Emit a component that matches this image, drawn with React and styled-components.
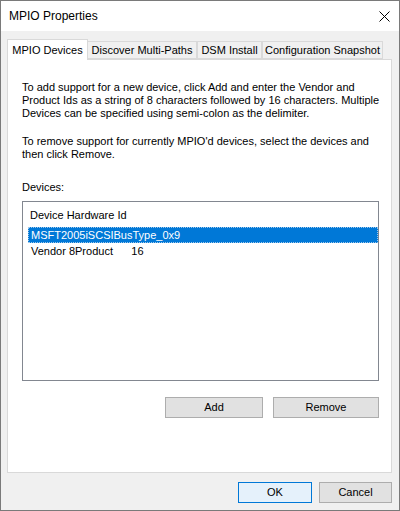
import React from 'react';
import styled, { createGlobalStyle } from 'styled-components';

const GlobalStyle = createGlobalStyle`
  html, body {
    margin: 0;
    padding: 0;
    background: #ffffff;
  }

  body {
    font-family: "Liberation Sans", Arial, sans-serif;
    font-size: 11px;
    color: #000000;
  }
`

const Window = styled.div`
  box-sizing: border-box;
  width: 400px;
  height: 511px;
  border: 1px solid #7a7a7a;
  display: flex;
  flex-direction: column;
  background: #f0f0f0;
`

const TitleBar = styled.div`
  height: 30px;
  background: #ffffff;
  display: flex;
  align-items: center;
  justify-content: space-between;
  padding: 0 9px 0 8px;
`

const Title = styled.span`
  font-size: 12px;
`

const CloseButton = styled.div`
  width: 12px;
  height: 12px;
  display: flex;
  align-items: center;
  justify-content: center;
`

const Body = styled.div`
  flex: 1;
  display: flex;
  flex-direction: column;
  padding: 7px 7px 0 6px;
`

const TabRow = styled.div`
  display: flex;
  align-items: flex-end;
  height: 21px;
  position: relative;
  z-index: 1;
`

const Tab = styled.div`
  box-sizing: border-box;
  height: ${p => (p.$active ? '21px' : '18px')};
  width: ${p => p.$width}px;
  margin-bottom: ${p => (p.$active ? '-1px' : '0')};
  padding-top: ${p => (p.$active ? '3px' : '1px')};
  background: ${p => (p.$active ? '#ffffff' : '#f0f0f0')};
  border: 1px solid #d9d9d9;
  border-bottom: ${p => (p.$active ? 'none' : '1px solid #d9d9d9')};
  border-left: ${p => (p.$noLeft ? 'none' : '1px solid #d9d9d9')};
  text-align: center;
  line-height: 14px;
  white-space: nowrap;
`

const Panel = styled.div`
  box-sizing: border-box;
  height: 414px;
  background: #ffffff;
  border: 1px solid #d9d9d9;
  padding: 21px 0 0 14px;
  display: flex;
  flex-direction: column;
`

const Paragraph = styled.p`
  margin: 0 0 ${p => p.$gap}px 0;
  line-height: 13px;
  white-space: nowrap;
`

const ListBox = styled.div`
  box-sizing: border-box;
  width: 357px;
  height: 180px;
  border: 1px solid #828790;
  display: flex;
  flex-direction: column;
`

const ListHeader = styled.div`
  height: 25px;
  line-height: 13px;
  padding: 7px 0 0 7px;
  box-sizing: border-box;
`

const ListItem = styled.div`
  box-sizing: border-box;
  height: 16px;
  line-height: 14px;
  margin-left: 5px;
  padding-left: 2px;
  white-space: pre;
  background: ${p => (p.$selected ? '#0078d7' : 'transparent')};
  color: ${p => (p.$selected ? '#ffffff' : '#000000')};
  border: 1px dotted ${p => (p.$selected ? '#9fc9ec' : 'transparent')};
`

const ButtonRow = styled.div`
  display: flex;
  justify-content: flex-end;
  gap: 10px;
  width: 357px;
  margin-top: 16px;
`

const Button = styled.div`
  box-sizing: border-box;
  width: ${p => p.$width}px;
  height: 21px;
  line-height: 19px;
  text-align: center;
  background: ${p => (p.$primary ? '#e5f1fb' : '#e1e1e1')};
  border: 1px solid ${p => (p.$primary ? '#0078d7' : '#adadad')};
  font-size: 11px;
`

const Footer = styled.div`
  display: flex;
  justify-content: flex-end;
  gap: 7px;
  padding-top: 9px;
`

function App() {
  return (
    <>
      <GlobalStyle />
      <Window>
        <TitleBar>
          <Title>MPIO Properties</Title>
          <CloseButton>
            <svg width="11" height="11" viewBox="0 0 11 11">
              <path d="M0.5 0.5 L10.5 10.5 M10.5 0.5 L0.5 10.5" stroke="#000" strokeWidth="1" />
            </svg>
          </CloseButton>
        </TitleBar>
        <Body>
          <TabRow>
            <Tab $active $width={81}>MPIO Devices</Tab>
            <Tab $width={109} $noLeft>Discover Multi-Paths</Tab>
            <Tab $width={65}>DSM Install</Tab>
            <Tab $width={121}>Configuration Snapshot</Tab>
          </TabRow>
          <Panel>
            <Paragraph $gap={15}>
              To add support for a new device, click Add and enter the Vendor and<br />
              Product Ids as a string of 8 characters followed by 16 characters. Multiple<br />
              Devices can be specified using semi-colon as the delimiter.
            </Paragraph>
            <Paragraph $gap={20}>
              To remove support for currently MPIO'd devices, select the devices and<br />
              then click Remove.
            </Paragraph>
            <Paragraph $gap={7}>Devices:</Paragraph>
            <ListBox>
              <ListHeader>Device Hardware Id</ListHeader>
              <ListItem $selected>MSFT2005iSCSIBusType_0x9</ListItem>
              <ListItem>{'Vendor 8Product      16'}</ListItem>
            </ListBox>
            <ButtonRow>
              <Button $width={98}>Add</Button>
              <Button $width={106}>Remove</Button>
            </ButtonRow>
          </Panel>
          <Footer>
            <Button $primary $width={74}>OK</Button>
            <Button $width={73}>Cancel</Button>
          </Footer>
        </Body>
      </Window>
    </>
  );
}

export default App;
